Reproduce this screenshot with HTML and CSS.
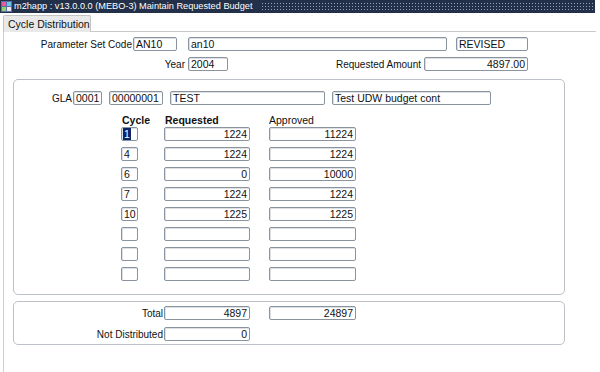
FILE: index.html
```html
<!DOCTYPE html>
<html lang="en">
<head>
<meta charset="UTF-8">
<title>Maintain Requested Budget</title>
<link rel="stylesheet" href="styles.css">
</head>
<body>

<div class="titlebar">
    <svg class="app-icon" width="11" height="11" viewBox="0 0 11 11">
        <rect x="0" y="0" width="11" height="11" fill="#5b6fa8"/>
        <rect x="1" y="1" width="4" height="4" fill="#e85c9c"/>
        <rect x="6" y="1" width="4" height="4" fill="#6fc3e8"/>
        <rect x="1" y="6" width="4" height="4" fill="#8ed36b"/>
        <rect x="6" y="6" width="4" height="4" fill="#f0e6f0"/>
    </svg>
    <span class="title">m2happ : v13.0.0.0 (MEBO-3) Maintain Requested Budget</span>
    <span class="dots"></span>
</div>

<div class="tabstrip">
    <div class="tab">Cycle Distribution</div>
    <div class="tab-line"></div>
</div>

<div class="page">
    <div class="row row-param">
        <label class="lbl lbl-param">Parameter Set Code</label>
        <div class="field w-code">AN10</div>
        <div class="field w-desc">an10</div>
        <div class="field w-status">REVISED</div>
    </div>
    <div class="row row-year">
        <label class="lbl lbl-year">Year</label>
        <div class="field w-year">2004</div>
        <label class="lbl lbl-amount">Requested Amount</label>
        <div class="field num w-amount">4897.00</div>
    </div>

    <div class="panel panel-cycles">
        <div class="row row-gla">
            <label class="lbl lbl-gla">GLA</label>
            <div class="field w-gla1">0001</div>
            <div class="field w-gla2">00000001</div>
            <div class="field w-gla3">TEST</div>
            <div class="field w-gla4">Test UDW budget cont</div>
        </div>

        <div class="row heads">
            <span class="col-cycle bold">Cycle</span>
            <span class="col-req bold">Requested</span>
            <span class="col-app">Approved</span>
        </div>

        <div class="rows" id="rows"></div>
    </div>

    <div class="panel panel-totals">
        <div class="row">
            <label class="lbl lbl-total">Total</label>
            <div class="field num col-req">4897</div>
            <div class="field num col-app">24897</div>
        </div>
        <div class="row">
            <label class="lbl lbl-total">Not Distributed</label>
            <div class="field num col-req">0</div>
        </div>
    </div>
</div>

<script>
    const cycles = [
        ['1', '1224', '11224'],
        ['4', '1224', '1224'],
        ['6', '0', '10000'],
        ['7', '1224', '1224'],
        ['10', '1225', '1225'],
        ['', '', ''],
        ['', '', ''],
        ['', '', '']
    ];

    const rows = document.getElementById('rows');
    cycles.forEach((c, i) => {
        const row = document.createElement('div');
        row.className = 'row data';
        const cycle = i === 0
            ? `<div class="field col-cycle"><span class="sel">${c[0]}</span></div>`
            : `<div class="field col-cycle">${c[0]}</div>`;
        row.innerHTML = cycle +
            `<div class="field num col-req">${c[1]}</div>` +
            `<div class="field num col-app">${c[2]}</div>`;
        rows.appendChild(row);
    });
</script>

</body>
</html>
```

FILE: styles.css
```css
body {
    margin: 0;
    background: #fff;
    font-family: "Liberation Sans", Arial, sans-serif;
    font-size: 10px;
    color: #111;
    width: 600px;
    height: 372px;
    overflow: hidden;
}

/* window title */
.titlebar {
    display: flex;
    align-items: center;
    width: 595px;
    height: 13px;
    background-color: #223049;
    color: #fff;
    font-size: 9.2px;
    line-height: 13px;
}
.app-icon {
    margin: 0 2px 0 1px;
    flex: none;
}
.title {
    white-space: nowrap;
    padding-right: 8px;
}
.dots {
    flex: 1;
    height: 9px;
    background-image: radial-gradient(circle, #9aa3b6 0.5px, transparent 0.9px);
    background-size: 3px 3px;
    margin-right: 2px;
}

/* tab */
.tabstrip {
    display: flex;
    align-items: flex-end;
    height: 18px;
    margin-top: 1px;
    margin-left: 3px;
}
.tab {
    height: 16px;
    line-height: 16px;
    padding: 0 4px;
    width: 78px;
    background: #e9e9e9;
    border: 1px solid #c4c4c4;
    border-bottom: none;
    border-radius: 2px 2px 0 0;
    font-size: 10.5px;
    white-space: nowrap;
}
.tab-line {
    width: 505px;
    border-bottom: 1px solid #c9c9c9;
}

.page {
    margin-left: 3px;
    border-left: 1px solid #cfcfcf;
    height: 340px;
    padding-top: 5px;
}

.row {
    display: flex;
    align-items: center;
    height: 14px;
}
.row-year {
    margin-top: 6px;
}

.lbl {
    text-align: right;
    white-space: nowrap;
    padding-right: 1px;
    box-sizing: border-box;
}
.lbl-param { width: 129px; }
.lbl-year { width: 182px; }
.lbl-amount { width: 194px; }
.lbl-gla { width: 59px; }
.lbl-total { width: 150px; }

.field {
    height: 14px;
    line-height: 12px;
    box-sizing: border-box;
    border: 1px solid #8a949f;
    border-radius: 2px;
    box-shadow: inset 1px 1px 0 #dde1e6;
    background: #fff;
    padding: 0 2px;
    font-size: 10.5px;
    white-space: nowrap;
    overflow: hidden;
}
.num { text-align: right; }

.w-code { width: 44px; }
.w-desc { width: 259px; margin-left: 11px; }
.w-status { width: 72px; margin-left: 9px; }
.w-year { width: 40px; margin-left: 2px; }
.w-amount { width: 104px; margin-left: 2px; }

.panel {
    margin-left: 9px;
    width: 552px;
    box-sizing: border-box;
    border: 1px solid #bcc1c7;
    border-radius: 5px;
}
.panel-cycles {
    margin-top: 8px;
    height: 216px;
    padding-top: 11px;
}
.w-gla1 { width: 29px; margin-left: 0; }
.w-gla2 { width: 54px; margin-left: 7px; }
.w-gla3 { width: 155px; margin-left: 7px; }
.w-gla4 { width: 159px; margin-left: 7px; }

.heads {
    margin-top: 8px;
    height: 14px;
    font-size: 10.5px;
}
.bold { font-weight: bold; }

.rows {
    display: flex;
    flex-direction: column;
    gap: 6px;
}

.col-cycle { width: 17px; margin-left: 107px; flex: none; }
.col-req { width: 86px; margin-left: 26px; flex: none; }
.col-app { width: 87px; margin-left: 19px; flex: none; }
.heads .col-cycle { margin-left: 108px; }
.heads .col-req { margin-left: 26px; }
.heads .col-app { margin-left: 18px; }

.panel-totals {
    margin-top: 6px;
    height: 44px;
    padding-top: 4px;
    display: flex;
    flex-direction: column;
    gap: 7px;
}
.panel-totals .col-req { margin-left: 0; }

.sel {
    background: #0a246a;
    color: #fff;
    padding: 0 1px;
    margin-left: -1px;
}
```
